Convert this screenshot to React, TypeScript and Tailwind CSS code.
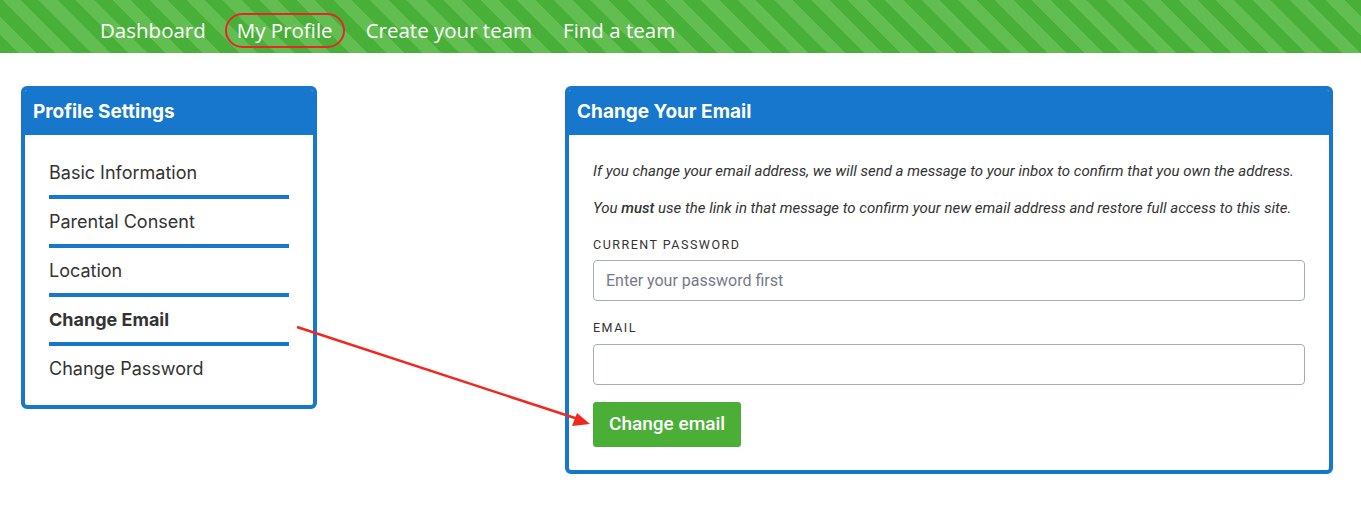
import React from 'react';

const menuItems = ['Basic Information', 'Parental Consent', 'Location', 'Change Email', 'Change Password'];

const App: React.FC = () => {
  return (
    <div className="relative min-h-[520px] bg-white font-['Inter','Liberation_Sans',sans-serif] text-[#333]">
      {/* Top nav */}
      <nav className="h-[53px] bg-[repeating-linear-gradient(45deg,#48b038_0px,#48b038_13px,#63be52_13px,#63be52_26px)] flex items-center pt-[7px] pl-[100px] font-['Open_Sans','Liberation_Sans',sans-serif] text-white text-[20.5px]">
        <span className="mr-[19px]">Dashboard</span>
        <span className="mr-[21px] px-[10px] h-[35px] flex items-center rounded-full border-2 border-[#e6262b]">
          My Profile
        </span>
        <span className="mr-[31px]">Create your team</span>
        <span>Find a team</span>
      </nav>

      <div className="flex items-start justify-between pl-[21px] pr-[28px] pt-[33px]">
        {/* Profile settings */}
        <div className="w-[296px] rounded-[6px] border-4 border-[#1677cc] bg-white overflow-hidden">
          <div className="bg-[#1677cc] h-[45px] flex items-center pl-[8px] text-white text-[19px] font-bold">
            Profile Settings
          </div>
          <ul className="px-[24px] pt-[15px] pb-[14px]">
            {menuItems.map((item, i) => (
              <li
                key={item}
                className={
                  'py-[9px] leading-[27px] text-[18px] ' +
                  (i < menuItems.length - 1 ? 'border-b-4 border-[#1677cc] ' : '') +
                  (item === 'Change Email' ? 'font-bold' : '')
                }
              >
                {item}
              </li>
            ))}
          </ul>
        </div>

        {/* Change email */}
        <div className="w-[768px] rounded-[6px] border-4 border-[#1677cc] bg-white overflow-hidden">
          <div className="bg-[#1677cc] h-[45px] flex items-center pl-[8px] text-white text-[19px] font-bold">
            Change Your Email
          </div>
          <div className="px-[24px] pt-[26px] pb-[23px] font-['Roboto','Liberation_Sans',sans-serif]">
            <p className="italic text-[15px] leading-[21px] mb-[16px]">
              If you change your email address, we will send a message to your inbox to confirm that you own the address.
            </p>
            <p className="italic text-[15px] leading-[21px]">
              You <span className="font-medium">must</span> use the link in that message to confirm your new email address and restore full access to this site.
            </p>
            <label className="block mt-[17px] text-[12.5px] leading-[18px] tracking-[0.12em] uppercase">
              Current Password
            </label>
            <input
              type="password"
              placeholder="Enter your password first"
              className="mt-[6px] block w-full h-[41px] rounded-[4px] border border-[#a6abb8] px-[12px] text-[16px] placeholder:text-[#757b87] outline-none"
            />
            <label className="block mt-[18px] text-[12.5px] leading-[18px] tracking-[0.12em] uppercase">
              Email
            </label>
            <input
              type="email"
              className="mt-[7px] block w-full h-[41px] rounded-[4px] border border-[#a6abb8] px-[12px] text-[16px] outline-none"
            />
            <button className="mt-[17px] h-[45px] px-[16px] rounded-[3px] bg-[#4aae37] text-white text-[19px] font-medium">
              Change email
            </button>
          </div>
        </div>
      </div>

      {/* Annotation arrow */}
      <svg className="absolute left-0 top-0 pointer-events-none" width="1361" height="520">
        <line x1="297" y1="327" x2="578" y2="419" stroke="#f0291f" strokeWidth="2.5" />
        <polygon points="590,424 572,426 577,413" fill="#f0291f" />
      </svg>
    </div>
  );
};

export default App;
